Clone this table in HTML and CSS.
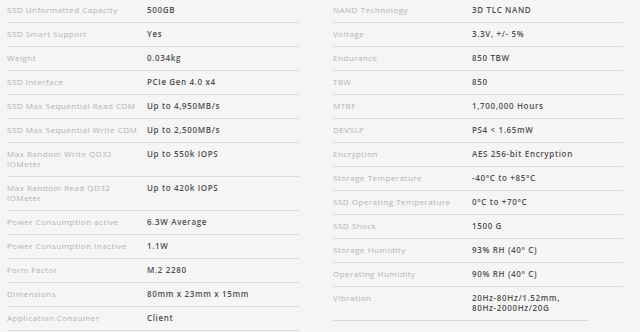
FILE: index.html
```html
<!DOCTYPE html>
<html>
<head>
<meta charset="utf-8">
<link rel="stylesheet" href="styles.css">
</head>
<body>
<div class="specs">
  <div class="col col-left">
    <div class="row"><div class="label">SSD Unformatted Capacity</div><div class="value">500GB</div></div>
    <div class="row"><div class="label">SSD Smart Support</div><div class="value">Yes</div></div>
    <div class="row"><div class="label">Weight</div><div class="value">0.034kg</div></div>
    <div class="row"><div class="label">SSD Interface</div><div class="value">PCIe Gen 4.0 x4</div></div>
    <div class="row"><div class="label">SSD Max Sequential Read CDM</div><div class="value">Up to 4,950MB/s</div></div>
    <div class="row"><div class="label">SSD Max Sequential Write CDM</div><div class="value">Up to 2,500MB/s</div></div>
    <div class="row"><div class="label">Max Random Write QD32<br>IOMeter</div><div class="value">Up to 550k IOPS</div></div>
    <div class="row"><div class="label">Max Random Read QD32<br>IOMeter</div><div class="value">Up to 420k IOPS</div></div>
    <div class="row"><div class="label">Power Consumption active</div><div class="value">6.3W Average</div></div>
    <div class="row"><div class="label">Power Consumption Inactive</div><div class="value">1.1W</div></div>
    <div class="row"><div class="label">Form Factor</div><div class="value">M.2 2280</div></div>
    <div class="row"><div class="label">Dimensions</div><div class="value">80mm x 23mm x 15mm</div></div>
    <div class="row"><div class="label">Application Consumer</div><div class="value">Client</div></div>
  </div>
  <div class="col col-right">
    <div class="row"><div class="label">NAND Technology</div><div class="value">3D TLC NAND</div></div>
    <div class="row"><div class="label">Voltage</div><div class="value">3.3V, +/- 5%</div></div>
    <div class="row"><div class="label">Endurance</div><div class="value">850 TBW</div></div>
    <div class="row"><div class="label">TBW</div><div class="value">850</div></div>
    <div class="row"><div class="label">MTBF</div><div class="value">1,700,000 Hours</div></div>
    <div class="row"><div class="label">DEVSLP</div><div class="value">PS4 &lt; 1.65mW</div></div>
    <div class="row"><div class="label">Encryption</div><div class="value">AES 256-bit Encryption</div></div>
    <div class="row"><div class="label">Storage Temperature</div><div class="value">-40°C to +85°C</div></div>
    <div class="row"><div class="label">SSD Operating Temperature</div><div class="value">0°C to +70°C</div></div>
    <div class="row"><div class="label">SSD Shock</div><div class="value">1500 G</div></div>
    <div class="row"><div class="label">Storage Humidity</div><div class="value">93% RH (40° C)</div></div>
    <div class="row"><div class="label">Operating Humidity</div><div class="value">90% RH (40° C)</div></div>
    <div class="row row-last"><div class="label">Vibration</div><div class="value">20Hz-80Hz/1.52mm,<br>80Hz-2000Hz/20G</div></div>
  </div>
</div>
</body>
</html>
```

FILE: styles.css
```css
html, body {
  margin: 0;
  padding: 0;
  background: #f6f5f5;
}
body {
  font-family: "Open Sans", "DejaVu Sans", sans-serif;
  font-size: 8px;
  line-height: 10px;
  overflow: hidden;
}
.specs {
  display: grid;
  grid-template-columns: 292px 290px;
  column-gap: 34px;
  padding-left: 7px;
  margin-top: -1px;
  align-items: start;
}
.row {
  display: grid;
  grid-template-columns: 140px 1fr;
  padding: 6px 0 7px;
  border-bottom: 1px solid #dedddd;
}
.col-right .row {
  grid-template-columns: 139px 1fr;
}
.row-last {
  border-bottom: none;
  background: linear-gradient(#dad9d9, #dad9d9) left bottom / 255px 1px no-repeat;
  padding-bottom: 8px;
}
.label {
  color: #b3b2b2;
  letter-spacing: 0.5px;
}
.value {
  color: #4f4e4e;
  letter-spacing: 0.65px;
  font-weight: 600;
}
```
